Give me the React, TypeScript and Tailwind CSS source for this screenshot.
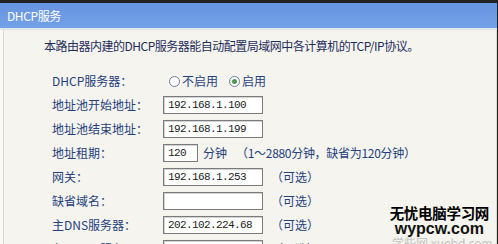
import React from 'react';

const CJK = "font-['Noto_Sans_CJK_SC',sans-serif]";

const Field: React.FC<{ value?: string; w?: string }> = ({ value = '', w = 'w-[100px]' }) => (
  <div
    className={`${w} h-[18px] bg-white border border-[#7b7b7b] shadow-[inset_1px_1px_0_#d4d4d4] flex items-center pl-[4px] font-['Liberation_Mono',monospace] text-[11px] tracking-[-0.6px] text-[#222]`}
  >
    {value}
  </div>
);

const Radio: React.FC<{ checked?: boolean }> = ({ checked }) => (
  <span className="w-[11px] h-[11px] rounded-full border border-[#6d7f98] bg-white flex items-center justify-center">
    {checked && <span className="w-[5px] h-[5px] rounded-full bg-[#4c9a4c]" />}
  </span>
);

const Optional = () => <span className="ml-[8px]">（可选）</span>;

const rows: { label: string; content: React.ReactNode }[] = [
  {
    label: 'DHCP服务器：',
    content: (
      <div className="flex items-center ml-[6px]">
        <Radio />
        <span className="ml-[2px]">不启用</span>
        <span className="ml-[11px]"><Radio checked /></span>
        <span className="ml-[2px]">启用</span>
      </div>
    ),
  },
  { label: '地址池开始地址：', content: <Field value="192.168.1.100" /> },
  { label: '地址池结束地址：', content: <Field value="192.168.1.199" /> },
  {
    label: '地址租期：',
    content: (
      <div className="flex items-center">
        <Field value="120" w="w-[35px]" />
        <span className="ml-[5px]">分钟</span>
        <span className="ml-[9px] tracking-[-0.3px]">（1～2880分钟，缺省为120分钟）</span>
      </div>
    ),
  },
  {
    label: '网关：',
    content: (
      <div className="flex items-center">
        <Field value="192.168.1.253" />
        <Optional />
      </div>
    ),
  },
  {
    label: '缺省域名：',
    content: (
      <div className="flex items-center">
        <Field />
        <Optional />
      </div>
    ),
  },
  {
    label: '主DNS服务器：',
    content: (
      <div className="flex items-center">
        <Field value="202.102.224.68" />
        <Optional />
      </div>
    ),
  },
  {
    label: '备用DNS服务器：',
    content: (
      <div className="flex items-center">
        <Field value="0.0.0.0" />
        <Optional />
      </div>
    ),
  },
];

const App: React.FC = () => {
  return (
    <div className={`relative w-[498px] h-[244px] overflow-hidden bg-[#222] pt-[3px] pr-[1px] ${CJK}`}>
      <div className="h-full flex flex-col bg-[#f5f4ee]">
        {/* Title bar */}
        <div className="h-[25px] shrink-0 bg-gradient-to-b from-[#6594e0] to-[#74a1e8] flex items-center pl-[7px] text-white text-[12px] tracking-[-0.4px]">
          DHCP服务
        </div>
        <div className="h-[2px] shrink-0 bg-[#dfe6f0]" />

        <div className="flex-1 flex">
          <div className="w-[4px] bg-[#fbfaf6] border-r border-[#dcd9cc]" />
          <div className="flex-1 border-r border-[#dcd9cc] pt-[8px] text-[12px] text-[#24407f]">
            <div className="pl-[40px] h-[16px] leading-[16px] text-[#1f2d5c] tracking-[-0.5px]">
              本路由器内建的DHCP服务器能自动配置局域网中各计算机的TCP/IP协议。
            </div>
            <div className="mt-[15px] pl-[48px]">
              {rows.map((r) => (
                <div key={r.label} className="h-[24px] flex items-center">
                  <div className="w-[111px] shrink-0">{r.label}</div>
                  {r.content}
                </div>
              ))}
            </div>
          </div>
        </div>
      </div>

      {/* watermark */}
      <div className="absolute left-[386px] top-[205px] flex flex-col items-center">
        <span className="leading-[16px] text-[14.5px] font-bold text-black tracking-[-0.3px]">无忧电脑学习网</span>
        <span className="leading-[15px] font-['Liberation_Sans',sans-serif] text-[16px] font-bold text-[#111]">wypcw.com</span>
        <span className="leading-[13px] text-[12px] text-[#c4c4c4] whitespace-nowrap ml-[6px]">学些网 xuehd.com</span>
      </div>
    </div>
  );
};

export default App;
